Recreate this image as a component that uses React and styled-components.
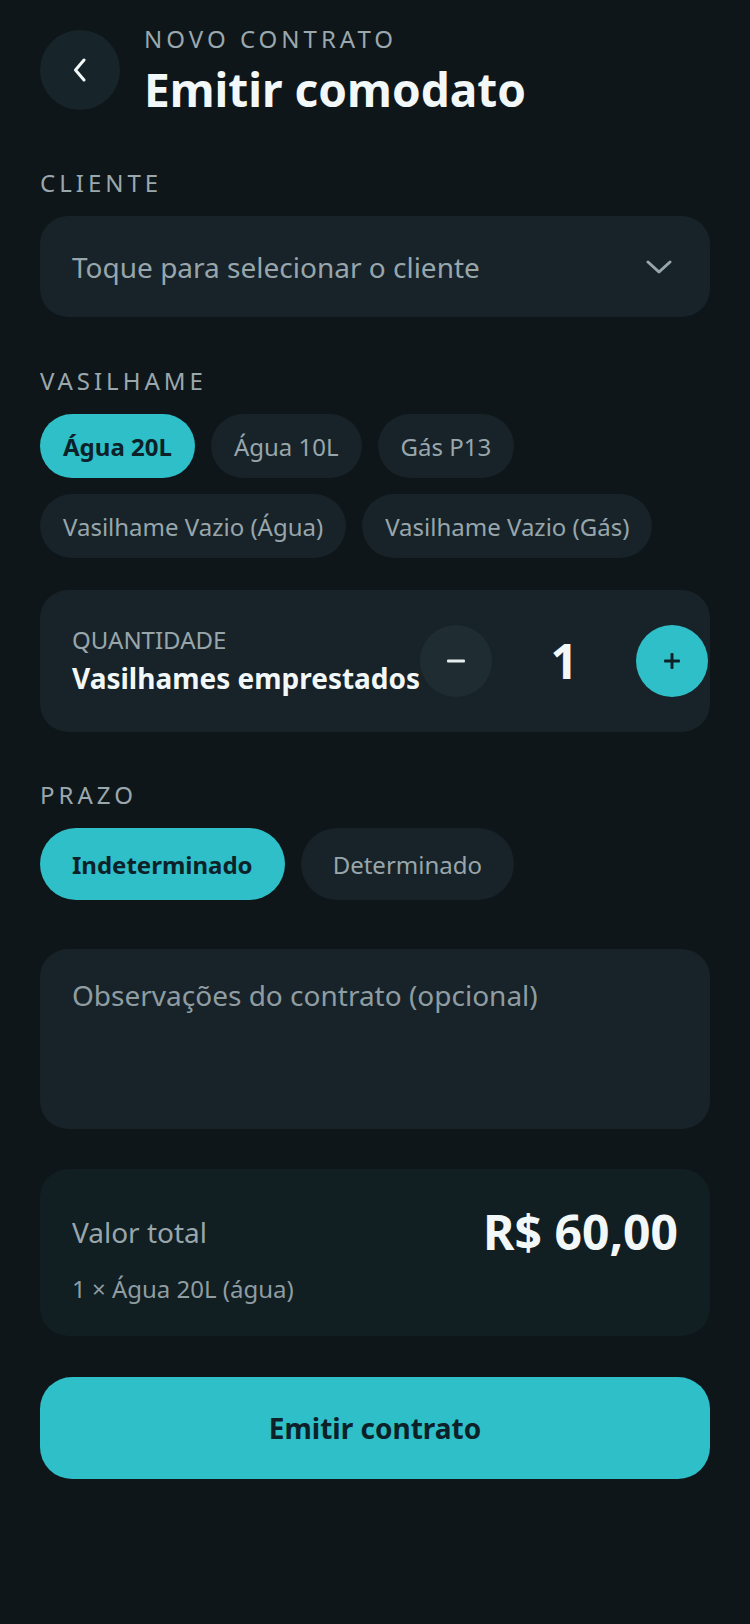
import React, { useState } from "react";
import styled, { createGlobalStyle } from "styled-components";

const GlobalStyle = createGlobalStyle`
  * { box-sizing: border-box; }
  html, body {
    margin: 0;
    padding: 0;
    background: #0e1619;
  }
  body {
    font-family: "Noto Sans", "Open Sans", sans-serif;
    color: #eef4f6;
  }
`;

const Page = styled.div`
  min-height: 1624px;
  padding: 23px 40px 60px;
  display: flex;
  flex-direction: column;
`;

const Header = styled.header`
  display: flex;
  align-items: center;
  gap: 24px;
`;

const BackButton = styled.button`
  width: 80px;
  height: 80px;
  border-radius: 50%;
  border: none;
  background: #17242a;
  display: flex;
  align-items: center;
  justify-content: center;
  padding: 0;
  flex-shrink: 0;
`;

const TitleBlock = styled.div`
  display: flex;
  flex-direction: column;
  gap: 6px;
`;

const Overline = styled.div`
  font-size: 24px;
  line-height: 32px;
  letter-spacing: 4px;
  color: #9aa8ae;
`;

const Title = styled.h1`
  margin: 0;
  font-size: 46px;
  line-height: 56px;
  font-weight: 700;
  color: #f2f7f8;
`;

const Block = styled.section`
  margin-top: ${(p) => p.$mt}px;
  display: flex;
  flex-direction: column;
`;

const Label = styled.div`
  font-size: 24px;
  line-height: 32px;
  letter-spacing: 4px;
  color: #9aa8ae;
  margin-bottom: 17px;
`;

const Select = styled.button`
  height: 101px;
  width: 100%;
  border: none;
  border-radius: 28px;
  background: #172328;
  padding: 0 38px 0 32px;
  display: flex;
  align-items: center;
  justify-content: space-between;
  font-family: inherit;
  font-size: 28px;
  color: #98a6ac;
`;

const ChipRow = styled.div`
  display: flex;
  flex-wrap: wrap;
  gap: 16px;
`;

const Chip = styled.button`
  height: ${(p) => (p.$tall ? 72 : 64)}px;
  padding: 0 ${(p) => (p.$tall ? 32 : 23)}px;
  border: none;
  border-radius: 40px;
  font-family: inherit;
  font-size: 24px;
  font-weight: ${(p) => (p.$active ? 700 : 400)};
  background: ${(p) => (p.$active ? "#2ebfc8" : "#172328")};
  color: ${(p) => (p.$active ? "#0c2228" : "#98a6ac")};
  white-space: nowrap;
`;

const QtyCard = styled.div`
  border-radius: 28px;
  background: #172328;
  padding: 35px 32px;
  display: flex;
  align-items: center;
  justify-content: space-between;
`;

const QtyText = styled.div`
  display: flex;
  flex-direction: column;
  gap: 6px;
  flex-shrink: 0;
  white-space: nowrap;
`;

const QtyCaption = styled.div`
  font-size: 24px;
  line-height: 28px;
  color: #98a6ac;
`;

const QtyTitle = styled.div`
  font-size: 28px;
  line-height: 36px;
  font-weight: 700;
  color: #f2f7f8;
`;

const Stepper = styled.div`
  display: flex;
  align-items: center;
  flex-shrink: 0;
`;

const StepButton = styled.button`
  width: 72px;
  height: 72px;
  border-radius: 50%;
  border: none;
  padding: 0;
  display: flex;
  align-items: center;
  justify-content: center;
  background: ${(p) => (p.$primary ? "#2ebfc8" : "#1f2c32")};
  color: ${(p) => (p.$primary ? "#0c2228" : "#e6eef0")};
`;

const StepValue = styled.div`
  width: 144px;
  text-align: center;
  font-size: 48px;
  line-height: 56px;
  font-weight: 700;
  color: #f2f7f8;
`;

const Notes = styled.textarea`
  height: 180px;
  width: 100%;
  border: none;
  border-radius: 28px;
  background: #172328;
  padding: 28px 32px;
  resize: none;
  outline: none;
  font-family: inherit;
  font-size: 28px;
  line-height: 36px;
  color: #eef4f6;
  &::placeholder {
    color: #8f9da3;
  }
`;

const TotalCard = styled.div`
  border-radius: 28px;
  background: #111e22;
  padding: 35px 32px 31px;
  display: flex;
  flex-direction: column;
  gap: 13px;
`;

const TotalRow = styled.div`
  display: flex;
  align-items: center;
  justify-content: space-between;
`;

const TotalLabel = styled.div`
  font-size: 28px;
  line-height: 36px;
  color: #98a6ac;
`;

const TotalValue = styled.div`
  font-size: 48px;
  line-height: 56px;
  font-weight: 700;
  color: #f2f7f8;
`;

const TotalSub = styled.div`
  font-size: 24px;
  line-height: 32px;
  color: #8f9da3;
`;

const SubmitButton = styled.button`
  height: 102px;
  width: 100%;
  border: none;
  border-radius: 32px;
  background: #2ebfc8;
  color: #0c2228;
  font-family: inherit;
  font-size: 28px;
  font-weight: 700;
`;

const vasilhames = [
  "Água 20L",
  "Água 10L",
  "Gás P13",
  "Vasilhame Vazio (Água)",
  "Vasilhame Vazio (Gás)",
];

const prazos = ["Indeterminado", "Determinado"];

export default function App() {
  const [tipo, setTipo] = useState("Água 20L");
  const [prazo, setPrazo] = useState("Indeterminado");
  const [qtd, setQtd] = useState(1);

  return (
    <>
      <GlobalStyle />
      <Page>
        <Header>
          <BackButton aria-label="Voltar">
            <svg width="14" height="24" viewBox="0 0 14 24" fill="none">
              <polyline
                points="11,2 2.5,12 11,22"
                stroke="#f2f7f8"
                strokeWidth="3"
                strokeLinecap="round"
                strokeLinejoin="round"
              />
            </svg>
          </BackButton>
          <TitleBlock>
            <Overline>NOVO CONTRATO</Overline>
            <Title>Emitir comodato</Title>
          </TitleBlock>
        </Header>

        <Block $mt={50}>
          <Label>CLIENTE</Label>
          <Select>
            Toque para selecionar o cliente
            <svg width="26" height="14" viewBox="0 0 26 14" fill="none">
              <polyline
                points="2,2 13,12 24,2"
                stroke="#98a6ac"
                strokeWidth="3"
                strokeLinecap="round"
                strokeLinejoin="round"
              />
            </svg>
          </Select>
        </Block>

        <Block $mt={48}>
          <Label>VASILHAME</Label>
          <ChipRow>
            {vasilhames.map((v) => (
              <Chip key={v} $active={v === tipo} onClick={() => setTipo(v)}>
                {v}
              </Chip>
            ))}
          </ChipRow>
        </Block>

        <Block $mt={32}>
          <QtyCard>
            <QtyText>
              <QtyCaption>QUANTIDADE</QtyCaption>
              <QtyTitle>Vasilhames emprestados</QtyTitle>
            </QtyText>
            <Stepper>
              <StepButton onClick={() => setQtd(Math.max(1, qtd - 1))}>
                <svg width="20" height="4" viewBox="0 0 20 4">
                  <rect x="1" y="0.5" width="18" height="3" rx="1" fill="currentColor" />
                </svg>
              </StepButton>
              <StepValue>{qtd}</StepValue>
              <StepButton $primary onClick={() => setQtd(qtd + 1)}>
                <svg width="20" height="20" viewBox="0 0 20 20">
                  <rect x="2" y="8.5" width="16" height="3" rx="1" fill="currentColor" />
                  <rect x="8.5" y="2" width="3" height="16" rx="1" fill="currentColor" />
                </svg>
              </StepButton>
            </Stepper>
          </QtyCard>
        </Block>

        <Block $mt={47}>
          <Label>PRAZO</Label>
          <ChipRow>
            {prazos.map((p) => (
              <Chip key={p} $tall $active={p === prazo} onClick={() => setPrazo(p)}>
                {p}
              </Chip>
            ))}
          </ChipRow>
        </Block>

        <Block $mt={49}>
          <Notes placeholder="Observações do contrato (opcional)" />
        </Block>

        <Block $mt={40}>
          <TotalCard>
            <TotalRow>
              <TotalLabel>Valor total</TotalLabel>
              <TotalValue>R$ {(60 * qtd).toFixed(2).replace(".", ",")}</TotalValue>
            </TotalRow>
            <TotalSub>{qtd} × Água 20L (água)</TotalSub>
          </TotalCard>
        </Block>

        <Block $mt={41}>
          <SubmitButton>Emitir contrato</SubmitButton>
        </Block>
      </Page>
    </>
  );
}
